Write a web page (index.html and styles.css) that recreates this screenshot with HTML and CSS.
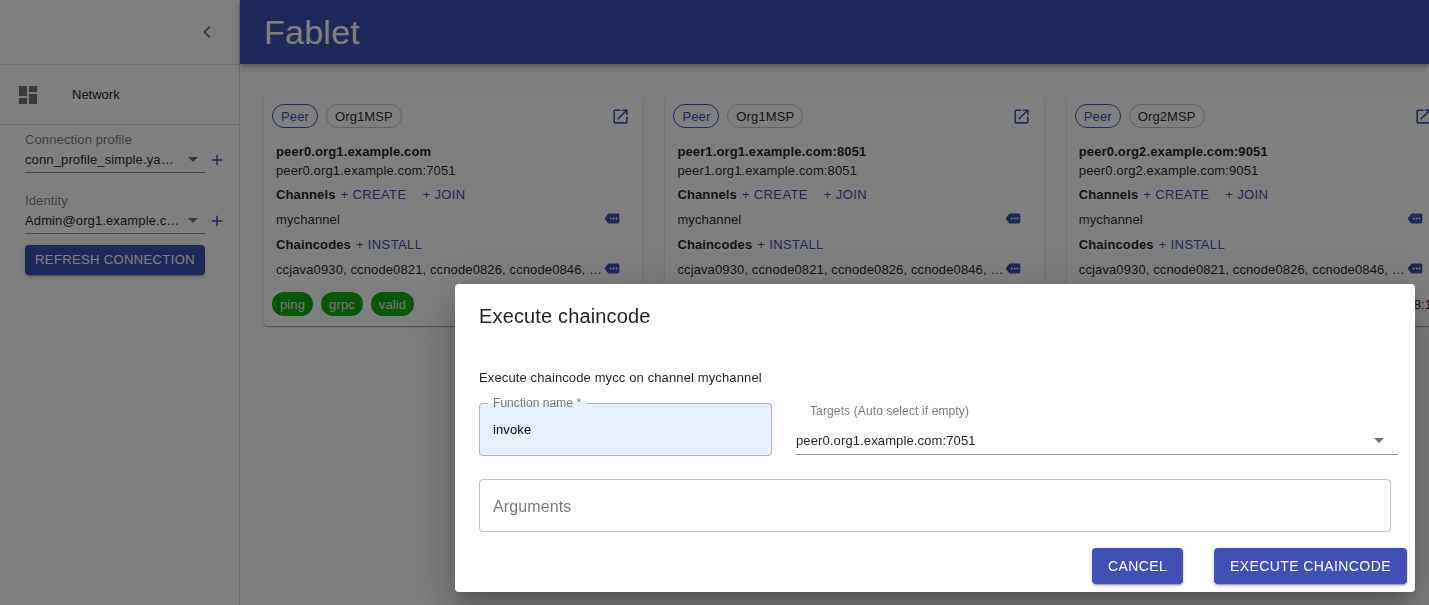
FILE: index.html
```html
<!DOCTYPE html>
<html lang="en">
<head>
    <meta charset="UTF-8">
    <meta name="viewport" content="width=device-width, initial-scale=1.0">
    <title>Fablet</title>
    <link rel="stylesheet" href="styles.css">
</head>
<body>
    <div class="app">
        <aside class="sidebar">
            <div class="sidebar-top">
                <svg class="chevron" viewBox="0 0 24 24"><path d="M15.41 7.41 14 6l-6 6 6 6 1.41-1.41L10.83 12z"/></svg>
            </div>
            <div class="nav-row">
                <svg class="nav-icon" viewBox="0 0 24 24"><path d="M3 13h8V3H3v10zm0 8h8v-6H3v6zm10 0h8V11h-8v10zm0-18v6h8V3h-8z"/></svg>
                <span class="nav-label">Network</span>
            </div>
            <div class="sidebar-form">
                <label class="side-label">Connection profile</label>
                <div class="side-select-row">
                    <div class="side-select">
                        <span class="side-value">conn_profile_simple.ya…</span>
                        <span class="caret"></span>
                    </div>
                    <svg class="plus" viewBox="0 0 24 24"><path d="M19 13h-6v6h-2v-6H5v-2h6V5h2v6h6v2z"/></svg>
                </div>
                <label class="side-label second">Identity</label>
                <div class="side-select-row">
                    <div class="side-select">
                        <span class="side-value">Admin@org1.example.c…</span>
                        <span class="caret"></span>
                    </div>
                    <svg class="plus" viewBox="0 0 24 24"><path d="M19 13h-6v6h-2v-6H5v-2h6V5h2v6h6v2z"/></svg>
                </div>
                <button class="btn btn-refresh">REFRESH CONNECTION</button>
            </div>
        </aside>
        <div class="content">
            <header class="topbar">
                <h1>Fablet</h1>
            </header>
            <main class="cards">
                <section class="card">
                    <div class="card-head">
                        <span class="chip chip-primary">Peer</span>
                        <span class="chip">Org1MSP</span>
                        <svg class="open-icon" viewBox="0 0 24 24"><path d="M19 19H5V5h7V3H5c-1.11 0-2 .9-2 2v14c0 1.1.89 2 2 2h14c1.1 0 2-.9 2-2v-7h-2v7zM14 3v2h3.59l-9.83 9.83 1.41 1.41L19 6.41V10h2V3h-7z"/></svg>
                    </div>
                    <div class="card-body">
                        <div class="peer-name">peer0.org1.example.com</div>
                        <div class="peer-url">peer0.org1.example.com:7051</div>
                        <div class="row"><b>Channels</b><a class="link">+ CREATE</a><a class="link link-join">+ JOIN</a></div>
                        <div class="row item"><span class="item-text">mychannel</span><svg class="tag" viewBox="0 0 24 24"><path d="M21 5H8.6c-.6 0-1.1.3-1.5.8L2 12l5.1 6.200c.4.5.9.8 1.500.8H21c1.100 0 2-.9 2-2V7c0-1.100-.9-2-2-2zM11 13.300a1.300 1.300 0 1 1 0-2.600 1.300 1.300 0 0 1 0 2.600zm4 0a1.300 1.300 0 1 1 0-2.600 1.300 1.300 0 0 1 0 2.600zm4 0a1.300 1.300 0 1 1 0-2.600 1.300 1.300 0 0 1 0 2.600z"/></svg></div>
                        <div class="row"><b>Chaincodes</b><a class="link">+ INSTALL</a></div>
                        <div class="row item"><span class="item-text">ccjava0930, ccnode0821, ccnode0826, ccnode0846, …</span><svg class="tag" viewBox="0 0 24 24"><path d="M21 5H8.6c-.6 0-1.1.3-1.5.8L2 12l5.1 6.200c.4.5.9.8 1.500.8H21c1.100 0 2-.9 2-2V7c0-1.100-.9-2-2-2zM11 13.300a1.300 1.300 0 1 1 0-2.600 1.300 1.300 0 0 1 0 2.600zm4 0a1.300 1.300 0 1 1 0-2.600 1.300 1.300 0 0 1 0 2.600zm4 0a1.300 1.300 0 1 1 0-2.600 1.300 1.300 0 0 1 0 2.600z"/></svg></div>
                    </div>
                    <div class="card-foot">
                        <span class="chip chip-green">ping</span>
                        <span class="chip chip-green">grpc</span>
                        <span class="chip chip-green">valid</span>
                    </div>
                </section>
                <section class="card">
                    <div class="card-head">
                        <span class="chip chip-primary">Peer</span>
                        <span class="chip">Org1MSP</span>
                        <svg class="open-icon" viewBox="0 0 24 24"><path d="M19 19H5V5h7V3H5c-1.11 0-2 .9-2 2v14c0 1.1.89 2 2 2h14c1.1 0 2-.9 2-2v-7h-2v7zM14 3v2h3.59l-9.83 9.83 1.41 1.41L19 6.41V10h2V3h-7z"/></svg>
                    </div>
                    <div class="card-body">
                        <div class="peer-name">peer1.org1.example.com:8051</div>
                        <div class="peer-url">peer1.org1.example.com:8051</div>
                        <div class="row"><b>Channels</b><a class="link">+ CREATE</a><a class="link link-join">+ JOIN</a></div>
                        <div class="row item"><span class="item-text">mychannel</span><svg class="tag" viewBox="0 0 24 24"><path d="M21 5H8.6c-.6 0-1.1.3-1.5.8L2 12l5.1 6.200c.4.5.9.8 1.500.8H21c1.100 0 2-.9 2-2V7c0-1.100-.9-2-2-2zM11 13.300a1.300 1.300 0 1 1 0-2.600 1.300 1.300 0 0 1 0 2.600zm4 0a1.300 1.300 0 1 1 0-2.600 1.300 1.300 0 0 1 0 2.600zm4 0a1.300 1.300 0 1 1 0-2.600 1.300 1.300 0 0 1 0 2.600z"/></svg></div>
                        <div class="row"><b>Chaincodes</b><a class="link">+ INSTALL</a></div>
                        <div class="row item"><span class="item-text">ccjava0930, ccnode0821, ccnode0826, ccnode0846, …</span><svg class="tag" viewBox="0 0 24 24"><path d="M21 5H8.6c-.6 0-1.1.3-1.5.8L2 12l5.1 6.200c.4.5.9.8 1.500.8H21c1.100 0 2-.9 2-2V7c0-1.100-.9-2-2-2zM11 13.300a1.300 1.300 0 1 1 0-2.600 1.300 1.300 0 0 1 0 2.600zm4 0a1.300 1.300 0 1 1 0-2.600 1.300 1.300 0 0 1 0 2.600zm4 0a1.300 1.300 0 1 1 0-2.600 1.300 1.300 0 0 1 0 2.600z"/></svg></div>
                    </div>
                    <div class="card-foot"></div>
                </section>
                <section class="card">
                    <div class="card-head">
                        <span class="chip chip-primary">Peer</span>
                        <span class="chip">Org2MSP</span>
                        <svg class="open-icon" viewBox="0 0 24 24"><path d="M19 19H5V5h7V3H5c-1.11 0-2 .9-2 2v14c0 1.1.89 2 2 2h14c1.1 0 2-.9 2-2v-7h-2v7zM14 3v2h3.59l-9.83 9.83 1.41 1.41L19 6.41V10h2V3h-7z"/></svg>
                    </div>
                    <div class="card-body">
                        <div class="peer-name">peer0.org2.example.com:9051</div>
                        <div class="peer-url">peer0.org2.example.com:9051</div>
                        <div class="row"><b>Channels</b><a class="link">+ CREATE</a><a class="link link-join">+ JOIN</a></div>
                        <div class="row item"><span class="item-text">mychannel</span><svg class="tag" viewBox="0 0 24 24"><path d="M21 5H8.6c-.6 0-1.1.3-1.5.8L2 12l5.1 6.200c.4.5.9.8 1.500.8H21c1.100 0 2-.9 2-2V7c0-1.100-.9-2-2-2zM11 13.300a1.300 1.300 0 1 1 0-2.600 1.300 1.300 0 0 1 0 2.600zm4 0a1.300 1.300 0 1 1 0-2.600 1.300 1.300 0 0 1 0 2.600zm4 0a1.300 1.300 0 1 1 0-2.600 1.300 1.300 0 0 1 0 2.600z"/></svg></div>
                        <div class="row"><b>Chaincodes</b><a class="link">+ INSTALL</a></div>
                        <div class="row item"><span class="item-text">ccjava0930, ccnode0821, ccnode0826, ccnode0846, …</span><svg class="tag" viewBox="0 0 24 24"><path d="M21 5H8.6c-.6 0-1.1.3-1.5.8L2 12l5.1 6.200c.4.5.9.8 1.500.8H21c1.100 0 2-.9 2-2V7c0-1.100-.9-2-2-2zM11 13.300a1.300 1.300 0 1 1 0-2.600 1.300 1.300 0 0 1 0 2.600zm4 0a1.300 1.300 0 1 1 0-2.600 1.300 1.300 0 0 1 0 2.600zm4 0a1.300 1.300 0 1 1 0-2.600 1.300 1.300 0 0 1 0 2.600z"/></svg></div>
                    </div>
                    <div class="card-foot"><span class="foot-time">8:1</span></div>
                </section>
            </main>
        </div>
    </div>

    <div class="backdrop"></div>

    <div class="dialog">
        <h2 class="dialog-title">Execute chaincode</h2>
        <p class="dialog-text">Execute chaincode mycc on channel mychannel</p>
        <div class="dialog-fields">
            <fieldset class="field-function">
                <legend>Function name *</legend>
                <span class="field-value">invoke</span>
            </fieldset>
            <div class="field-targets">
                <label class="targets-label">Targets (Auto select if empty)</label>
                <div class="targets-select">
                    <span>peer0.org1.example.com:7051</span>
                    <span class="caret"></span>
                </div>
            </div>
        </div>
        <div class="field-args">Arguments</div>
        <div class="dialog-actions">
            <button class="btn btn-cancel">CANCEL</button>
            <button class="btn btn-execute">EXECUTE CHAINCODE</button>
        </div>
    </div>
</body>
</html>
```

FILE: styles.css
```css
* {
    box-sizing: border-box;
}

html, body {
    margin: 0;
    padding: 0;
    height: 100%;
    overflow: hidden;
}

body {
    font-family: "Liberation Sans", Arial, sans-serif;
    background-color: #fafafa;
    color: rgba(0, 0, 0, 0.87);
    font-size: 13px;
    letter-spacing: 0.00938em;
}

.app {
    display: flex;
    height: 605px;
}

/* Sidebar */
.sidebar {
    width: 240px;
    flex: none;
    background-color: #fff;
    border-right: 1px solid rgba(0, 0, 0, 0.12);
}

.sidebar-top {
    height: 65px;
    display: flex;
    align-items: center;
    justify-content: flex-end;
    padding-right: 20px;
    border-bottom: 1px solid rgba(0, 0, 0, 0.12);
}

.chevron {
    width: 24px;
    height: 24px;
    fill: rgba(0, 0, 0, 0.54);
}

.nav-row {
    height: 60px;
    display: flex;
    align-items: center;
    padding-left: 16px;
    border-bottom: 1px solid rgba(0, 0, 0, 0.12);
}

.nav-icon {
    width: 24px;
    height: 24px;
    fill: rgba(0, 0, 0, 0.54);
}

.nav-label {
    margin-left: 32px;
    font-size: 13px;
    letter-spacing: 0;
}

.sidebar-form {
    padding: 7px 0 0 25px;
}

.side-label {
    display: block;
    font-size: 13px;
    line-height: 15px;
    color: rgba(0, 0, 0, 0.54);
}

.side-label.second {
    margin-top: 20px;
}

.side-select-row {
    display: flex;
    align-items: center;
}

.side-select {
    width: 180px;
    height: 26px;
    display: flex;
    align-items: center;
    border-bottom: 1px solid rgba(0, 0, 0, 0.42);
    padding-right: 7px;
}

.side-value {
    flex: 1;
    min-width: 0;
    white-space: nowrap;
    font-size: 13px;
}

.caret {
    flex: none;
    width: 0;
    height: 0;
    border-left: 5px solid transparent;
    border-right: 5px solid transparent;
    border-top: 5px solid rgba(0, 0, 0, 0.54);
}

.plus {
    width: 18px;
    height: 18px;
    margin-left: 3px;
    fill: #3f51b5;
}

.btn {
    display: block;
    border: 0;
    border-radius: 4px;
    background-color: #3f51b5;
    color: #fff;
    font-family: inherit;
    font-size: 13px;
    letter-spacing: 0.02857em;
    box-shadow: 0 3px 1px -2px rgba(0, 0, 0, 0.2), 0 2px 2px 0 rgba(0, 0, 0, 0.14), 0 1px 5px 0 rgba(0, 0, 0, 0.12);
}

.btn-refresh {
    width: 180px;
    height: 30px;
    margin-top: 11px;
    padding: 0 0 2px;
}

/* Header */
.content {
    flex: 1;
    min-width: 0;
}

.topbar {
    height: 64px;
    background-color: #3f51b5;
    color: #fff;
    display: flex;
    align-items: center;
    padding-left: 24px;
    box-shadow: 0 2px 4px -1px rgba(0, 0, 0, 0.2), 0 4px 5px 0 rgba(0, 0, 0, 0.14), 0 1px 10px 0 rgba(0, 0, 0, 0.12);
}

.topbar h1 {
    margin: 1px 0 0;
    font-size: 34px;
    font-weight: 400;
    letter-spacing: 0.00735em;
}

/* Cards */
.cards {
    display: flex;
    gap: 23px;
    padding: 32px 0 0 24px;
}

.card {
    width: 378.4px;
    height: 230px;
    flex: none;
    background-color: #fff;
    border-radius: 4px;
    padding: 8px;
    box-shadow: 0 2px 1px -1px rgba(0, 0, 0, 0.2), 0 1px 1px 0 rgba(0, 0, 0, 0.14), 0 1px 3px 0 rgba(0, 0, 0, 0.12);
    display: flex;
    flex-direction: column;
}

.card-head {
    display: flex;
    align-items: center;
    gap: 8px;
    height: 24px;
}

.chip {
    display: inline-flex;
    align-items: center;
    height: 24px;
    padding: 0 8px;
    border: 1px solid rgba(0, 0, 0, 0.23);
    border-radius: 12px;
    font-size: 13px;
}

.chip-primary {
    border-color: #3f51b5;
    color: #3f51b5;
}

.chip-green {
    border: 0;
    background-color: #10ac10;
    color: #eee;
    padding: 0 8px;
}

.open-icon {
    width: 19px;
    height: 19px;
    margin-left: auto;
    margin-right: 4.4px;
    fill: #3f51b5;
}

.card-body {
    padding: 14px 4px 0;
}

.peer-name {
    font-weight: 700;
    line-height: 19px;
}

.peer-url {
    line-height: 19px;
    margin-bottom: 2px;
}

.row {
    height: 25px;
    display: flex;
    align-items: center;
}

.row b {
    margin-right: 5px;
}

.link {
    color: #3f51b5;
    letter-spacing: 0.02857em;
}

.link-join {
    margin-left: 16px;
}

.item-text {
    flex: 1;
    min-width: 0;
    white-space: nowrap;
}

.tag {
    flex: none;
    width: 17px;
    height: 17px;
    margin: 0 10.4px 3px 0;
    fill: #3f51b5;
}

.card-foot {
    display: flex;
    align-items: center;
    gap: 8px;
    margin-top: auto;
    height: 24px;
    margin-bottom: 2px;
}

.foot-time {
    margin-left: auto;
    margin-right: 5px;
}

/* Modal */
.backdrop {
    position: fixed;
    inset: 0;
    background-color: rgba(0, 0, 0, 0.5);
}

.dialog {
    position: fixed;
    left: 455px;
    top: 284px;
    width: 960px;
    height: 308px;
    background-color: #fff;
    border-radius: 4px;
    padding: 0 24px;
    box-shadow: 0 11px 15px -7px rgba(0, 0, 0, 0.2), 0 24px 38px 3px rgba(0, 0, 0, 0.14), 0 9px 46px 8px rgba(0, 0, 0, 0.12);
}

.dialog-title {
    margin: 0;
    padding-top: 20px;
    font-size: 20px;
    line-height: 24px;
    font-weight: 400;
    letter-spacing: 0.0075em;
}

.dialog-text {
    margin: 42px 0 0;
    font-size: 13px;
    line-height: 16px;
}

.dialog-fields {
    display: flex;
    gap: 24px;
    margin-top: 17px;
}

.field-function {
    flex: none;
    width: 293px;
    height: 60px;
    margin: -7px 0 0;
    padding: 0 13px;
    border: 1px solid rgba(0, 0, 0, 0.25);
    border-radius: 4px;
    background-color: #e8f0fe;
    display: block;
}

.field-function legend {
    margin-left: -5px;
    padding: 0 6px 0 5px;
    font-size: 12px;
    line-height: 14px;
    letter-spacing: 0.05px;
    color: rgba(0, 0, 0, 0.54);
}

.field-value {
    display: block;
    margin-top: 12px;
    line-height: 16px;
    color: #000;
}

.field-targets {
    flex: none;
    width: 602px;
}

.targets-label {
    display: block;
    margin: 1px 0 0 14px;
    font-size: 12px;
    line-height: 14px;
    color: rgba(0, 0, 0, 0.54);
}

.targets-select {
    height: 30px;
    margin-top: 7px;
    padding-top: 2px;
    display: flex;
    align-items: center;
    justify-content: space-between;
    padding-right: 14px;
    border-bottom: 1px solid rgba(0, 0, 0, 0.42);
}

.field-args {
    width: 912px;
    height: 53px;
    margin-top: 23px;
    padding: 2px 0 0 13px;
    display: flex;
    align-items: center;
    font-size: 16px;
    color: rgba(0, 0, 0, 0.54);
    border: 1px solid rgba(0, 0, 0, 0.23);
    border-radius: 4px;
}

.dialog-actions {
    display: flex;
    justify-content: flex-end;
    gap: 31px;
    margin: 16px -16px 0 0;
}

.btn-cancel {
    width: 91px;
    height: 36px;
    font-size: 14px;
}

.btn-execute {
    width: 193px;
    height: 36px;
    font-size: 14px;
}
```
